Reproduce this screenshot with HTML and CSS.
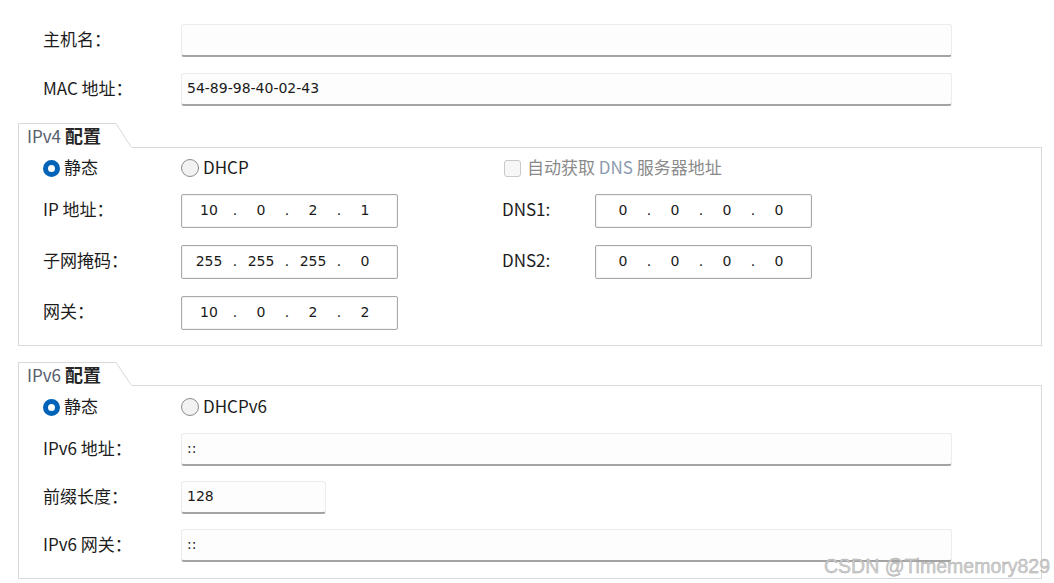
FILE: index.html
```html
<!DOCTYPE html>
<html lang="zh-CN">
<head>
<meta charset="utf-8">
<title>IP 配置</title>
<link rel="stylesheet" href="styles.css">
</head>
<body>
<div class="page">
  <div class="top">
    <div class="field-row">
      <span class="label">主机名：</span>
      <div class="text-input wide"></div>
    </div>
    <div class="field-row">
      <span class="label">MAC 地址：</span>
      <div class="text-input wide">54-89-98-40-02-43</div>
    </div>
  </div>

  <section class="group">
    <div class="group-head">
      <div class="tab"><span class="tab-en">IPv4</span> <b class="tab-zh">配置</b></div>
      <svg class="tab-slant" width="16" height="25" viewBox="0 0 16 25"><path d="M0 0.5 L15.5 24.5" stroke="#d9d9d9" stroke-width="1" fill="none"/></svg>
      <div class="tab-rest"></div>
    </div>
    <div class="group-body v4">
      <div class="v4-radio-row">
        <label class="radio-item"><span class="radio checked"></span><span class="txt">静态</span></label>
        <label class="radio-item"><span class="radio"></span><span class="txt">DHCP</span></label>
        <label class="check-item"><span class="checkbox"></span><span class="txt">自动获取 <span class="dns-en">DNS</span> 服务器地址</span></label>
      </div>
      <div class="v4-row">
        <span class="label">IP 地址：</span>
        <div class="ip-box"><span class="oct">10</span><span class="dot">.</span><span class="oct">0</span><span class="dot">.</span><span class="oct">2</span><span class="dot">.</span><span class="oct">1</span></div>
        <span class="label dns-label">DNS1:</span>
        <div class="ip-box"><span class="oct">0</span><span class="dot">.</span><span class="oct">0</span><span class="dot">.</span><span class="oct">0</span><span class="dot">.</span><span class="oct">0</span></div>
      </div>
      <div class="v4-row">
        <span class="label">子网掩码：</span>
        <div class="ip-box"><span class="oct">255</span><span class="dot">.</span><span class="oct">255</span><span class="dot">.</span><span class="oct">255</span><span class="dot">.</span><span class="oct">0</span></div>
        <span class="label dns-label">DNS2:</span>
        <div class="ip-box"><span class="oct">0</span><span class="dot">.</span><span class="oct">0</span><span class="dot">.</span><span class="oct">0</span><span class="dot">.</span><span class="oct">0</span></div>
      </div>
      <div class="v4-row">
        <span class="label">网关：</span>
        <div class="ip-box"><span class="oct">10</span><span class="dot">.</span><span class="oct">0</span><span class="dot">.</span><span class="oct">2</span><span class="dot">.</span><span class="oct">2</span></div>
      </div>
    </div>
  </section>

  <section class="group v6-group">
    <div class="group-head short">
      <div class="tab"><span class="tab-en">IPv6</span> <b class="tab-zh">配置</b></div>
      <svg class="tab-slant" width="16" height="24" viewBox="0 0 16 24"><path d="M0 0.5 L15.5 23.5" stroke="#d9d9d9" stroke-width="1" fill="none"/></svg>
      <div class="tab-rest"></div>
    </div>
    <div class="group-body v6">
      <div class="v6-radio-row">
        <label class="radio-item"><span class="radio checked"></span><span class="txt">静态</span></label>
        <label class="radio-item"><span class="radio"></span><span class="txt">DHCPv6</span></label>
      </div>
      <div class="v6-row">
        <span class="label">IPv6 地址：</span>
        <div class="text-input wide">::</div>
      </div>
      <div class="v6-row">
        <span class="label">前缀长度：</span>
        <div class="text-input short-input">128</div>
      </div>
      <div class="v6-row">
        <span class="label">IPv6 网关：</span>
        <div class="text-input wide">::</div>
      </div>
    </div>
  </section>

  <div class="watermark">CSDN @Timememory829</div>
</div>
</body>
</html>
```

FILE: styles.css
```css
html, body {
  margin: 0;
  padding: 0;
  background: #ffffff;
}

body {
  font-family: "Noto Sans CJK SC", "Noto Sans", sans-serif;
  font-size: 17px;
  color: #1c1c1c;
  width: 1054px;
  height: 583px;
  overflow: hidden;
}

.page {
  position: relative;
  height: 583px;
  box-sizing: border-box;
  padding: 24px 12px 0 18px;
}

.label {
  line-height: 20px;
  padding-bottom: 4px;
  white-space: nowrap;
}

/* ---------- top fields ---------- */
.top {
  display: flex;
  flex-direction: column;
  gap: 16px;
  padding-left: 25px;
}

.field-row {
  display: grid;
  grid-template-columns: 138px auto;
  align-items: center;
}

.text-input {
  box-sizing: border-box;
  height: 33px;
  background: #fdfdfd;
  border: 1px solid #ececec;
  border-bottom: 2px solid #a3a3a3;
  border-radius: 3px;
  padding: 0 5px;
  font-family: "DejaVu Sans", sans-serif;
  font-size: 14px;
  line-height: 29px;
  color: #1a1a1a;
}

.text-input.wide {
  width: 771px;
}

.text-input.short-input {
  width: 145px;
}

/* ---------- groups ---------- */
.group {
  margin-top: 17px;
}

.v6-group {
  margin-top: 16px;
}

.group-head {
  display: flex;
  height: 25px;
}

.group-head.short {
  height: 24px;
}

.tab {
  box-sizing: border-box;
  width: 98px;
  border-top: 1px solid #d9d9d9;
  border-left: 1px solid #d9d9d9;
  padding-left: 8px;
  font-size: 18px;
  line-height: 22px;
  white-space: nowrap;
}

.tab-en {
  color: #56606e;
  font-size: 17px;
}

.tab-zh {
  color: #262626;
  font-weight: 700;
}

.tab-slant {
  display: block;
  flex: none;
}

.tab-rest {
  flex: 1;
  border-bottom: 1px solid #d9d9d9;
}

.group-body {
  border: 1px solid #d9d9d9;
  border-top: none;
  padding-left: 24px;
}

/* ---------- radios ---------- */
.radio-item,
.check-item {
  display: flex;
  align-items: center;
  white-space: nowrap;
  height: 18px;
  line-height: 18px;
}

.txt {
  padding-bottom: 3px;
}

.radio-item {
  gap: 4px;
}

.radio {
  box-sizing: border-box;
  width: 18px;
  height: 18px;
  border-radius: 50%;
  border: 1px solid #8c8c8c;
  background: #f2f2f2;
}

.radio.checked {
  width: 17px;
  height: 17px;
  border: 5px solid #0063b8;
  background: #ffffff;
}

.check-item {
  gap: 6px;
  color: #8a8a8a;
}

.dns-en {
  color: #8c9bb0;
}

.checkbox {
  box-sizing: border-box;
  width: 17px;
  height: 17px;
  border: 1px solid #c8c8c8;
  border-radius: 3px;
  background: #f7f7f7;
}

/* ---------- IPv4 body ---------- */
.v4 {
  padding-top: 11px;
  padding-bottom: 15px;
  display: flex;
  flex-direction: column;
  gap: 17px;
}

.v4-radio-row,
.v4-row {
  display: grid;
  grid-template-columns: 138px 217px 104px 93px 217px;
  align-items: center;
}

.v4-radio-row {
  height: 18px;
  grid-template-rows: 18px;
}

.v4-radio-row .check-item {
  grid-column: 4 / span 2;
  margin-left: 2px;
}

.dns-label {
  grid-column: 4;
}

.ip-box {
  box-sizing: border-box;
  height: 34px;
  display: flex;
  align-items: center;
  padding-left: 9px;
  padding-bottom: 2px;
  background: #ffffff;
  border: 1px solid #a8a8a8;
  border-radius: 2px;
  box-shadow: inset 0 0 0 1px #f4f4f4;
  font-family: "DejaVu Sans", sans-serif;
  font-size: 14px;
  color: #1a1a1a;
}

.oct {
  width: 36px;
  text-align: center;
}

.dot {
  width: 16px;
  text-align: center;
}

/* ---------- IPv6 body ---------- */
.v6 {
  padding-top: 12px;
  padding-bottom: 16px;
  display: flex;
  flex-direction: column;
  gap: 15px;
}

.v6-radio-row {
  display: grid;
  grid-template-columns: 138px auto;
  grid-template-rows: 18px;
  align-items: center;
  height: 18px;
}

.v6-radio-row + .v6-row {
  margin-top: 2px;
}

.v6-row {
  display: grid;
  grid-template-columns: 138px auto;
  align-items: center;
}

/* ---------- watermark ---------- */
.watermark {
  position: absolute;
  right: 4px;
  bottom: 7px;
  font-family: "Liberation Sans", sans-serif;
  font-size: 19.5px;
  line-height: 20px;
  color: #cfcfcf;
  -webkit-text-stroke: 0.4px #a9a9a9;
  white-space: nowrap;
}
```
